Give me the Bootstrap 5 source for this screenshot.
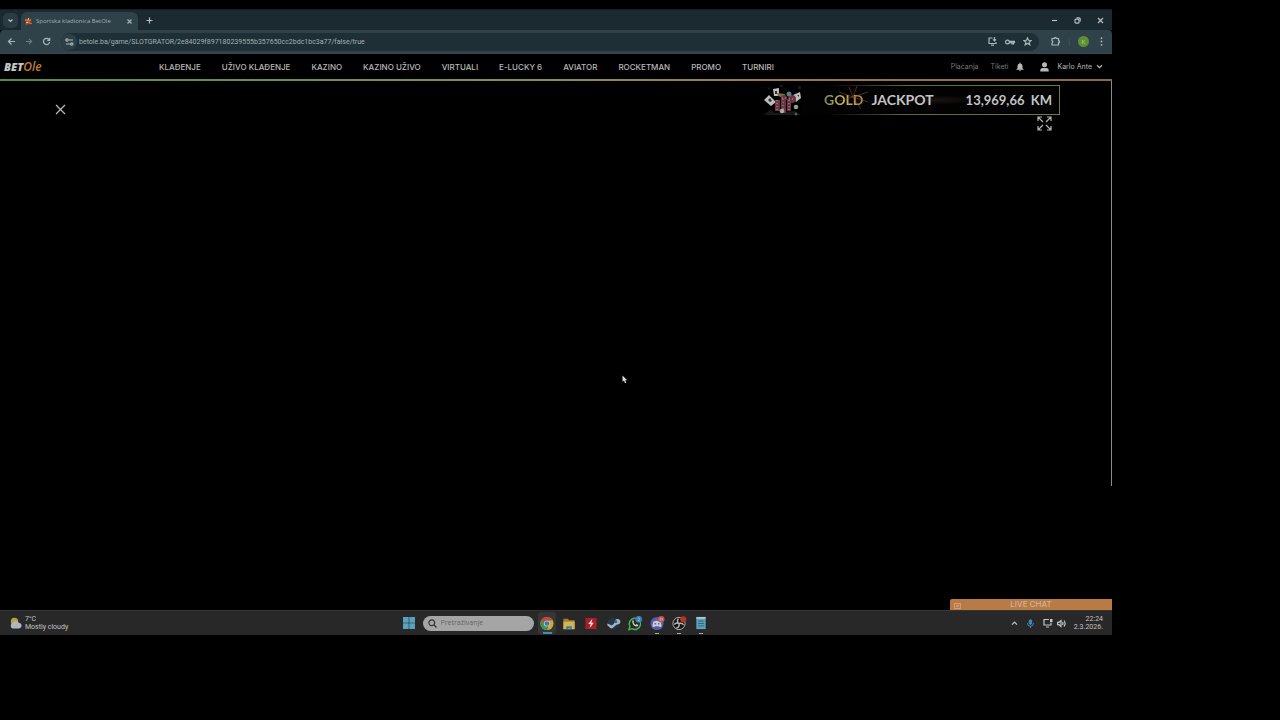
<!DOCTYPE html>
<html lang="bs">
<head>
<meta charset="utf-8">
<meta name="viewport" content="width=device-width, initial-scale=1">
<title>Sportska kladionica BetOle</title>
<link href="https://cdn.jsdelivr.net/npm/bootstrap@5.3.0/dist/css/bootstrap.min.css" rel="stylesheet">
<style>
  body { background:#000; color:#b9bdbd; font-family:Roboto,sans-serif; font-size:7px; line-height:8px; padding:9px 168px 85px 0; }
  button { background:none; border:0; padding:0; color:inherit; line-height:0; }
  a { color:inherit; text-decoration:none; }
  svg { display:block; flex:none; }
  .ln { fill:none; stroke:currentColor; stroke-width:1.2; }
  .tabstrip { height:21px; background:#1a2a30; border-top:1px solid #14201f; }
  .tab-search { width:15px; height:15px; border-radius:5px; background:#2a3c43; margin:0 3px 0 3px; }
  .page-tab { width:117px; height:18px; background:#2f4249; border-radius:6px 6px 0 0; padding:0 5px 0 4px; gap:4px; color:#a5afb2; font-family:"Open Sans",sans-serif; font-size:6px; }
  .toolbar { height:24px; background:#2f4249; border-bottom:1px solid #38484e; padding:0 9px 0 7px; color:#a9b6ba; border-radius:4px 4px 0 0; }
  .history { gap:9px; }
  .address { height:18px; background:#1e2f36; border-radius:9px; padding:0 7px 0 0; margin-left:10px; gap:8px; }
  .site-info { width:16px; height:16px; border-radius:50%; background:#2d4047; }
  .address input { background:none; border:0; padding:0; outline:0; color:#a4b0b4; font-family:Roboto,sans-serif; font-size:7px; line-height:10px; margin-left:-6px; }
  .avatar { width:11px; height:11px; border-radius:50%; background:#5f8f35; color:#b5cb80; font-size:6px; line-height:11px; }
  .kebab { margin-left:11px; }
  .site-nav { height:27px; border-bottom:2px solid; border-image:linear-gradient(90deg,#5c8a45,#8a8f4b 50%,#9c7548 75%,#8d6844) 1; font-family:Inter,sans-serif; color:#b8b8b8; padding:0 9px 0 4px; }
  .brand { width:155px; font-family:"Open Sans",sans-serif; font-style:italic; font-weight:800; font-size:11px; line-height:24px; color:#c6c6c6; }
  .brand span { color:#c27b35; font-size:12px; font-weight:600; }
  .menu { gap:21px; font-size:8px; font-weight:500; line-height:10px; }
  .dim { color:#777; }
  .game { flex:1; padding:3px 52px 0 55px; }
  .close-game { margin-top:20px; }
  .edge { right:0; top:0; width:1px; height:405px; background:#8b8b8b; }
  .jackpot { height:32px; width:297px; font-family:Lato,sans-serif; font-weight:700; font-size:14px; line-height:16px; color:#c4c4c4; }
  .amount { font-size:13px; }
  .banner { height:30px; border:1px solid; border-image:linear-gradient(90deg,#000 10%,#5f6a2e 40%,#74783c) 1; border-left:0; background:radial-gradient(ellipse at 52% 50%,#1b1414 0,#0d0a0a 14%,transparent 24%), #020202; padding:0 7px 0 22px; }
  .gold { background:linear-gradient(90deg,#85854b,#c5b65c 50%,#b78450); -webkit-background-clip:text; background-clip:text; color:transparent; }
  .spark { left:35px; top:0; }
  .chat { right:0; bottom:0; width:162px; height:11px; background:#b87b46; color:#d0b195; font:500 8px/11px Inter,sans-serif; border-radius:2px 0 0 0; }
  .pointer { left:622px; top:294px; }
  .taskbar { height:25px; background:#282828; border-top:1px solid #353535; color:#c3c3c3; padding:0 9px; }
  .side { flex:1 1 0; }
  .weather { gap:2px; }
  .search { width:111px; height:15px; border-radius:8px; background:#a5a5a5; color:#333; padding:0 5px; gap:4px; }
  .search input { width:80px; border:0; padding:0; background:none; outline:0; font-family:"Open Sans",sans-serif; font-size:7px; line-height:10px; }
  .search input::placeholder { color:#666; opacity:1; }
  .apps { gap:4px; }
  .apps button { width:18px; height:22px; padding:0 1px; position:relative; }
  .apps .open::after { content:""; position:absolute; left:7px; bottom:0; width:4px; height:1px; background:#aaa; }
  .apps .active { background:#363636; border-radius:3px; }
  .apps .active::after { left:5px; width:9px; height:2px; background:#438cad; }
</style>
</head>
<body class="min-vh-100 d-flex flex-column">
<header>
  <div class="tabstrip d-flex align-items-center">
    <button class="tab-search d-flex align-items-center justify-content-center" aria-label="Search tabs"><svg width="7" height="7" viewBox="0 0 7 7" class="ln"><path d="M1.5 2.5l2 2 2-2"/></svg></button>
    <div class="page-tab d-flex align-items-center align-self-end">
      <svg width="7" height="7" viewBox="0 0 7 7"><path fill="#593b30" d="M0 0h7v7H0z"/><path fill="#c4683c" d="M0 1h3l1 1 2-1v2L4 4l3 1v1H4L3 5 1 7V5l1-2H0z"/><path fill="#cec5bd" d="M3 0h1v2H3zM1 4h2v1H1z"/></svg>
      <span class="flex-grow-1 text-nowrap">Sportska kladionica BetOle</span>
      <button aria-label="Close tab"><svg width="7" height="7" viewBox="0 0 7 7" class="ln"><path d="M1.5 1.5l4 4m0-4l-4 4"/></svg></button>
    </div>
    <button class="ms-2" aria-label="New tab"><svg width="7" height="7" viewBox="0 0 7 7" class="ln"><path d="M3.5.5v6M.5 3.5h6"/></svg></button>
    <div class="ms-auto d-flex align-items-center pe-2">
      <button class="me-3" aria-label="Minimize"><svg width="7" height="7" viewBox="0 0 7 7" class="ln"><path d="M1 3.5h5"/></svg></button>
      <button class="me-3" aria-label="Restore"><svg width="7" height="7" viewBox="0 0 7 7" class="ln"><rect x="1" y="2.2" width="4" height="4" rx="1"/><path d="M2.5.8H5q1.2 0 1.2 1.2v2.5"/></svg></button>
      <button aria-label="Close"><svg width="7" height="7" viewBox="0 0 7 7" class="ln"><path d="M1 1l5 5m0-5L1 6"/></svg></button>
    </div>
  </div>
  <div class="toolbar d-flex align-items-center">
    <div class="history d-flex">
      <button aria-label="Back"><svg width="9" height="9" viewBox="0 0 9 9" class="ln"><path d="M8 4.5H1.5M4.5 1.5l-3 3 3 3"/></svg></button>
      <button class="opacity-50" aria-label="Forward"><svg width="8" height="9" viewBox="0 0 9 9" class="ln"><path d="M1 4.5h6.500M4.500 1.500l3 3-3 3"/></svg></button>
      <button aria-label="Reload"><svg width="9" height="9" viewBox="0 0 9 9" class="ln"><path d="M7 2.500A3.100 3.100 0 1 0 7.600 5M7.700.8v2.500H5.200"/></svg></button>
    </div>
    <div class="address d-flex flex-grow-1 align-items-center">
      <button class="site-info d-flex align-items-center justify-content-center" aria-label="Site information"><svg width="9" height="8" viewBox="0 0 9 8" class="ln"><circle cx="2" cy="2" r="1.200"/><path d="M4 2h4M1 6h4"/><circle cx="6.800" cy="6" r="1.200"/></svg></button>
      <input class="flex-grow-1" aria-label="Address" value="betole.ba/game/SLOTGRATOR/2e84029f897180239555b357650cc2bdc1bc3a77/false/true">
      <button aria-label="Install"><svg width="9" height="9" viewBox="0 0 9 9" class="ln"><path d="M4.500 1H1v5.500h7V5M3 8.200h3M6.500 0v3.500M5 2.300l1.500 1.500L8 2.300"/></svg></button>
      <button aria-label="Passwords"><svg width="10" height="8" viewBox="0 0 10 8" class="ln"><circle cx="2.500" cy="4" r="1.900"/><path d="M4.500 3.300h5v1.400h-1v1.300H7V4.700H4.500"/></svg></button>
      <button aria-label="Bookmark"><svg width="9" height="9" viewBox="0 0 9 9" class="ln"><path d="M4.500.9l1 2.400 2.600.2-2 1.700.7 2.600-2.300-1.400-2.300 1.400.7-2.600-2-1.700 2.600-.2z"/></svg></button>
    </div>
    <button class="ms-2 ps-1" aria-label="Extensions"><svg width="9" height="9" viewBox="0 0 9 9" class="ln"><path d="M1 1.500h2.300a1 1 0 0 1 2 0h2.200v2.200a1 1 0 0 1 0 2V8H1V6a1.200 1.200 0 0 0 0-2.300z"/></svg></button>
    <span class="ms-2 opacity-25">|</span>
    <button class="avatar ms-2" aria-label="Profile">K</button>
    <button class="kebab" aria-label="Menu"><svg width="3" height="9" viewBox="0 0 3 9" fill="currentColor"><circle cx="1.500" cy="1.200" r=".9"/><circle cx="1.500" cy="4.500" r=".9"/><circle cx="1.500" cy="7.800" r=".9"/></svg></button>
  </div>
  <nav class="site-nav d-flex align-items-center">
    <a href="#" class="brand">BET<span>Ole</span></a>
    <div class="menu d-flex text-nowrap">
      <a href="#">KLAĐENJE</a><a href="#">UŽIVO KLAĐENJE</a><a href="#">KAZINO</a><a href="#">KAZINO UŽIVO</a><a href="#">VIRTUALI</a><a href="#">E-LUCKY 6</a><a href="#">AVIATOR</a><a href="#">ROCKETMAN</a><a href="#">PROMO</a><a href="#">TURNIRI</a>
    </div>
    <div class="ms-auto d-flex align-items-center text-nowrap">
      <a href="#" class="dim">Plaćanja</a><a href="#" class="dim ms-2 ps-1">Tiketi</a>
      <button class="ms-2" aria-label="Notifications"><svg width="8" height="10" viewBox="0 0 9 10" fill="currentColor"><path d="M4 0h1v1q2.300.4 2.300 3v2.500L9 8.200H0l1.700-1.700V4Q1.700 1.400 4 1zM3.300 8.700h2.400q-1.200 2-2.400 0z"/></svg></button>
      <svg class="ms-3" width="9" height="10" viewBox="0 0 9 10" fill="currentColor"><circle cx="4.500" cy="2.800" r="2.500"/><path d="M.3 9.500V8q0-2 2.400-2h3.600q2.400 0 2.400 2v1.500z"/></svg>
      <a href="#" class="ms-2">Karlo Ante</a>
      <svg class="ms-1" width="7" height="7" viewBox="0 0 7 7"><path class="ln" d="M1 2.300l2.500 2.400L6 2.300"/></svg>
    </div>
  </nav>
</header>
<main class="game position-relative d-flex justify-content-between align-items-start">
  <button class="close-game" aria-label="Close game"><svg width="11" height="11" viewBox="0 0 11 11" class="ln"><path d="M1 1l9 9m0-9l-9 9"/></svg></button>
  <div class="d-flex flex-column align-items-end">
    <div class="jackpot d-flex align-items-center">
      <svg width="39" height="32" viewBox="0 0 39 32">
        <path fill="#181818" d="M1 31l6-5 5 3 20-2 6 4zM4 3l4 1-2 2zM17 1h3v2h-3zM35 2h3v3h-3z"/>
        <g fill="#bdbdbd"><path d="M1 16l5-5 7 7-5 4zM10 5l6-1v8h-5zM30 11l7-3 1 6-5 4z"/></g>
        <path fill="#333" d="M5 16l2-2 2 3-2 1zM12 7h2v3h-2zM34 11h2v2z"/>
        <path fill="#797044" d="M14 9l8 1-1 4-6-2z"/>
        <g fill="#6d3444"><path d="M12 16h5v11h-5zM18 14h5v15h-5zM24 15h4v12h-4z"/><circle cx="29" cy="15" r="4"/><circle cx="21" cy="14" r="3"/></g>
        <path stroke="#b69aa0" stroke-dasharray="1 2" fill="none" d="M14 16v11M20 15v13M26 16v10M26 15h6M19 14h5"/>
        <circle cx="26" cy="10" r="2.500" fill="#538084"/><circle cx="33" cy="23" r="2.300" fill="#959b9b"/><circle cx="19" cy="27" r="2.300" fill="#aaa"/><circle cx="33" cy="30" r="1.500" fill="#555"/>
      </svg>
      <div class="banner position-relative flex-grow-1 d-flex align-items-center text-nowrap">
        <svg class="spark position-absolute" width="36" height="28" viewBox="0 0 36 28" fill="none" stroke="#7b5129" stroke-width=".6"><path d="M2 6l14 5L12 1M16 11L20 0M16 11L31 6M16 11l15 5M16 11l8 12M16 11L2 15"/></svg>
        <span class="gold">GOLD</span><span class="ms-2">JACKPOT</span><span class="amount ms-auto">13,969,66&nbsp; KM</span>
      </div>
    </div>
    <button class="me-2" aria-label="Fullscreen"><svg width="15" height="15" viewBox="0 0 15 15" fill="none" stroke="#b5b5b5" stroke-width="1.200"><path d="M1 5V1h4M1 1l5 5M10 1h4v4M14 1L9 6M1 10v4h4M1 14l5-5M14 10v4h-4M14 14L9 9"/></svg></button>
  </div>
  <div class="edge position-absolute"></div>
  <svg class="pointer position-absolute" width="6" height="9" viewBox="0 0 6 9"><path fill="#ddd" d="M.5.5v6.300L2 5.500l1 2.800 1.300-.5-1.100-2.500h2z"/></svg>
  <button class="chat position-absolute text-center"><svg class="position-absolute top-0 start-0 ms-1 mt-1" width="7" height="6" viewBox="0 0 7 6" fill="none" stroke="#d0a888" stroke-width=".8"><path d="M.5.500h6v5h-6zM2 2l3 2M5 2L2 4"/></svg>LIVE CHAT</button>
</main>
<footer class="taskbar d-flex align-items-center">
  <div class="side weather d-flex align-items-center">
    <svg width="14" height="14" viewBox="0 0 14 14"><circle cx="5.500" cy="5.500" r="3.700" fill="#baa044"/><path fill="#afb7bd" d="M3.500 12.500a3 3 0 0 1 0-5.500 3.500 3.500 0 0 1 6.300-.2 2.900 2.900 0 0 1 .7 5.700z"/></svg>
    <div>7°C<br>Mostly cloudy</div>
  </div>
  <div class="d-flex align-items-center">
    <button class="me-2" aria-label="Start"><svg width="12" height="12" viewBox="0 0 12 12" fill="#58a2bd"><path d="M0 0h5.700v5.700H0zM6.300 0H12v5.700H6.300zM0 6.300h5.700V12H0zM6.300 6.300H12V12H6.300z"/></svg></button>
    <label class="search d-flex align-items-center"><svg width="9" height="9" viewBox="0 0 9 9" class="ln"><circle cx="3.800" cy="3.800" r="2.900"/><path d="M6 6l2.500 2.500"/></svg><input type="search" placeholder="Pretraživanje" aria-label="Pretraživanje"></label>
    <div class="apps d-flex ms-1">
      <button class="open active" aria-label="Chrome"><svg width="16" height="15" viewBox="0 0 16 16"><circle cx="8" cy="8" r="7" fill="#c7ab38"/><path fill="#b54a3d" d="M1.900 4.500a7 7 0 0 1 12.200 0L8 5 5 9z"/><path fill="#3e9255" d="M1.900 4.500L5.500 10 10 10.500 8 15A7 7 0 0 1 1.900 4.500z"/><circle cx="8" cy="8" r="3.300" fill="#c5c9c9"/><circle cx="8" cy="8" r="2.500" fill="#387bb5"/></svg></button>
      <button aria-label="Files"><svg width="16" height="15" viewBox="0 0 16 16"><path fill="#a87d2c" d="M2 3h5l1 1.500h6V14H2z"/><path fill="#cfb459" d="M2 6h12v8H2z"/><path fill="#3b7d9b" d="M5 11h6v3H9v-1H7v1H5z"/></svg></button>
      <button aria-label="Flash"><svg width="16" height="15" viewBox="0 0 16 16"><path fill="#a81f25" d="M2 2h12v12H2z"/><path fill="#ddd" d="M9.500 3L5 8.500h2.500L6.500 13 11 7.200H8.500z"/></svg></button>
      <button aria-label="Steam"><svg width="16" height="15" viewBox="0 0 16 16"><circle cx="8" cy="8" r="6" fill="#23374c"/><path fill="#9eb8c8" d="M2 8l5 2 3-3a3 3 0 1 1 2 2L8.500 12A2.500 2.500 0 0 1 4 11.500L2 10z"/><circle cx="11" cy="6" r="1.500" fill="#365a77"/></svg></button>
      <button aria-label="WhatsApp"><svg width="16" height="15" viewBox="0 0 16 16" fill="none" stroke="#40b852" stroke-width="1.500"><path d="M1.500 14.500l1-3.500a6 6 0 1 1 2.300 2.500z"/><path fill="#ccc" stroke="none" d="M5 5l1-.7 1 2-.7.7q1 2 2.600 2.500l.7-1 2 1q-.5 2-2 1.700Q5 10.500 5 5z"/><circle cx="12" cy="3.500" r="3.700" fill="#347fab" stroke="none"/><path stroke="#ccc" stroke-width=".7" d="M11 2.500q1-1 2 0 0 1-2 2.700h2.200"/></svg></button>
      <button class="open" aria-label="Discord"><svg width="16" height="15" viewBox="0 0 16 16"><circle cx="8" cy="8" r="7" fill="#585aae"/><path fill="#ccc" d="M4 6q4-2 8 0l1 5-2 1-1-1H6l-1 1-2-1z"/><path fill="#585aae" d="M5.500 7.500H7V9H5.500zM9 7.500h1.500V9H9z"/><circle cx="12.500" cy="3.500" r="3.500" fill="#b9525e"/><path stroke="#ddd" stroke-width=".7" d="M11.500 2v3M13.500 2v3"/></svg></button>
      <button class="open" aria-label="OBS"><svg width="16" height="15" viewBox="0 0 16 16" fill="none" stroke="#b5b5b5"><circle cx="8" cy="8" r="6.500" fill="#171717"/><path stroke-width="1.500" d="M7.500 3a3 3 0 0 0 .5 5q3-1 5 1.500M8 8q1 4-3 5M8 8q-3-1.500-5 1"/><circle cx="12.500" cy="3.500" r="3.300" fill="#b83225" stroke="none"/></svg></button>
      <button class="open" aria-label="Notepad"><svg width="16" height="15" viewBox="0 0 16 16"><path fill="#5d9fb8" d="M3 2h10v12H3z"/><path fill="#a8c9d2" d="M3 1h10v2H3z"/><path stroke="#2b647b" d="M5 5.500h6M5 8h6M5 10.500h6"/></svg></button>
    </div>
  </div>
  <div class="side d-flex align-items-center justify-content-end">
    <button aria-label="Hidden icons"><svg width="7" height="7" viewBox="0 0 7 7" class="ln"><path d="M1 4.700l2.500-2.500L6 4.700"/></svg></button>
    <svg class="ms-2" width="9" height="9" viewBox="0 0 9 9" fill="none" stroke="#4289bd"><rect x="3.200" y=".8" width="2.500" height="4.500" rx="1.200" fill="#4289bd"/><path d="M1.500 4.200q0 3 3 3t3-3M4.500 7v2"/></svg>
    <svg class="ms-2" width="10" height="10" viewBox="0 0 10 10"><path class="ln" d="M6 1.500H1V7h7V4.500M3 9h3"/><path fill="currentColor" d="M7 1h2.500v3H7z"/></svg>
    <svg class="ms-1" width="9" height="9" viewBox="0 0 9 9"><path class="ln" d="M.6 3.300H2L4 1.500v6L2 5.700H.6zM5.500 3q1 1.500 0 3M7 1.500q2.200 3 0 6"/></svg>
    <div class="ms-2 text-end">22:24<br>2.3.2026.</div>
  </div>
</footer>
<script src="https://cdn.jsdelivr.net/npm/bootstrap@5.3.0/dist/js/bootstrap.bundle.min.js"></script>
</body>
</html>
